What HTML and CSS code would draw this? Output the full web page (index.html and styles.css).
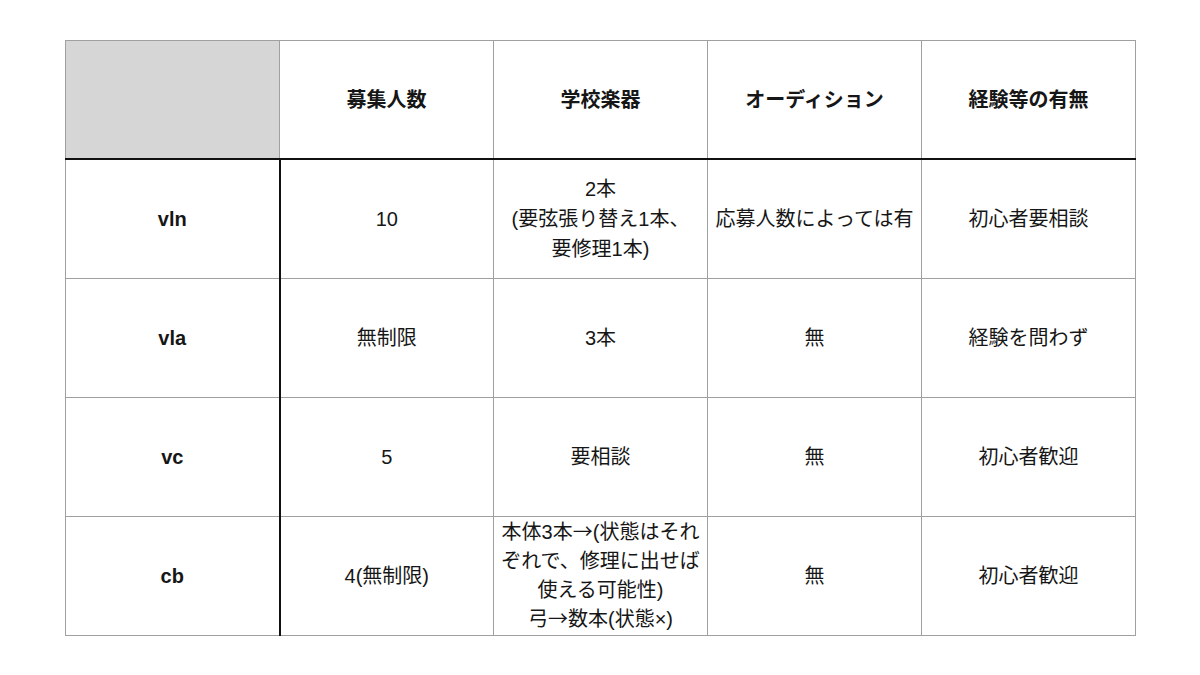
FILE: index.html
```html
<!DOCTYPE html>
<html lang="ja">
<head>
<meta charset="utf-8">
<link rel="stylesheet" href="styles.css">
</head>
<body>
<div class="page">
<table class="grid">
  <colgroup>
    <col class="c0"><col class="c1"><col class="c2"><col class="c3"><col class="c4">
  </colgroup>
  <thead>
    <tr class="head">
      <th class="corner"></th>
      <th>募集人数</th>
      <th>学校楽器</th>
      <th>オーディション</th>
      <th>経験等の有無</th>
    </tr>
  </thead>
  <tbody>
    <tr>
      <th class="rowhead">vln</th>
      <td>10</td>
      <td>2本<br>(要弦張り替え1本、<br>要修理1本)</td>
      <td>応募人数によっては有</td>
      <td>初心者要相談</td>
    </tr>
    <tr>
      <th class="rowhead">vla</th>
      <td>無制限</td>
      <td>3本</td>
      <td>無</td>
      <td>経験を問わず</td>
    </tr>
    <tr>
      <th class="rowhead">vc</th>
      <td>5</td>
      <td>要相談</td>
      <td>無</td>
      <td>初心者歓迎</td>
    </tr>
    <tr>
      <th class="rowhead">cb</th>
      <td>4(無制限)</td>
      <td class="dense">本体3本<span class="arrow">→</span>(状態はそれ<br>ぞれで、修理に出せば<br>使える可能性)<br>弓<span class="arrow">→</span>数本(状態×)</td>
      <td>無</td>
      <td>初心者歓迎</td>
    </tr>
  </tbody>
</table>
</div>
</body>
</html>
```

FILE: styles.css
```css
html, body {
  margin: 0;
  padding: 0;
  background: #ffffff;
}

.page {
  width: 1200px;
  height: 675px;
  padding: 40px 0 0 65px;
  box-sizing: border-box;
}

.grid {
  border-collapse: collapse;
  table-layout: fixed;
  width: 1069px;
  font-family: "Liberation Sans", "Noto Sans CJK JP", sans-serif;
  font-size: 20px;
  color: #161616;
}

.c0, .c1, .c2, .c3, .c4 { width: 214px; }

.grid th,
.grid td {
  border: 1px solid #a0a0a0;
  text-align: center;
  vertical-align: middle;
  padding: 0 2px;
  line-height: 30px;
  white-space: nowrap;
}

.head th {
  height: 117px;
  font-weight: 700;
  border-bottom: 2px solid #111111;
}

.grid tbody tr {
  height: 119px;
}

.corner {
  background: #d6d6d6;
}

.rowhead {
  font-weight: 700;
  border-right: 2px solid #111111 !important;
}

.grid td {
  font-weight: 400;
}

.grid td.dense {
  line-height: 29px;
  padding-top: 1px;
}

.arrow {
  font-family: "Noto Sans CJK JP", sans-serif;
  line-height: 0;
}
```
